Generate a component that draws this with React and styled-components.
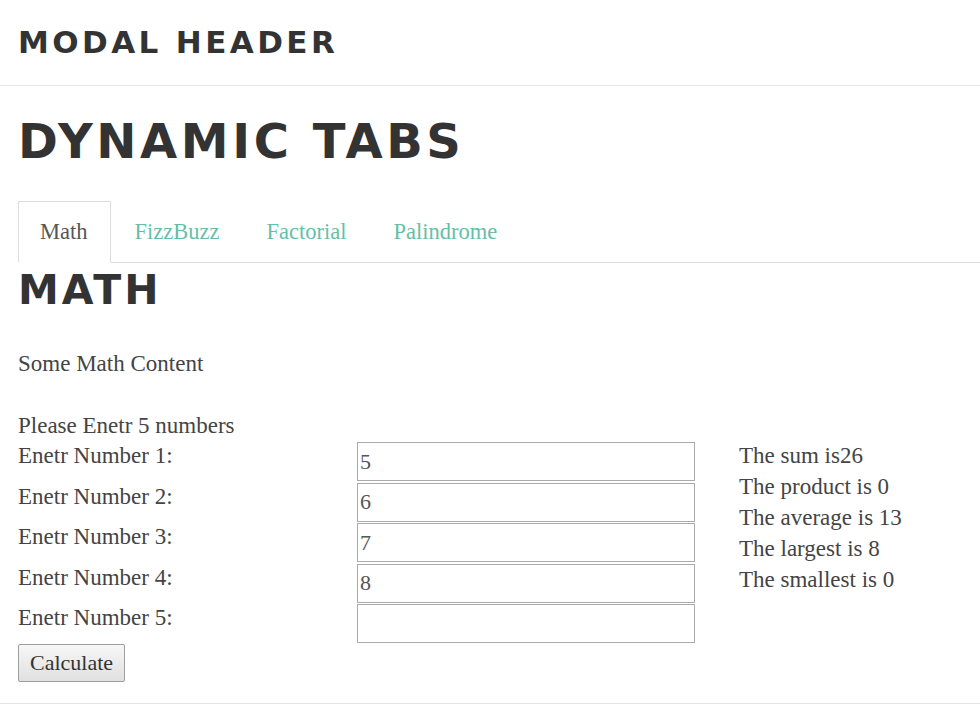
import React from "react";
import styled, { createGlobalStyle } from "styled-components";

const GlobalStyle = createGlobalStyle`
    body {
        margin: 0;
        background: #fff;
        color: #333;
        font-family: "Liberation Serif", serif;
    }
`

const Page = styled.div`
    width: 980px;
    height: 704px;
    overflow: hidden;
    display: flex;
    flex-direction: column;
`

const ModalHead = styled.div`
    height: 85px;
    border-bottom: 1px solid #e5e5e5;
    padding: 0 18px;
    display: flex;
    align-items: center;
`

const Heading = styled.h1`
    margin: 0;
    font-family: "DejaVu Sans", sans-serif;
    font-weight: bold;
    color: #333;
    font-size: ${props => props.size};
    letter-spacing: ${props => props.spacing};
    line-height: 1;
`

const Body = styled.div`
    padding: 0 0 0 18px;
    flex: 1;
    border-bottom: 1px solid #e5e5e5;
`

const TitleWrap = styled.div`
    padding-top: 31px;
    height: 115px;
    box-sizing: border-box;
`

const TabBar = styled.ul`
    list-style: none;
    margin: 0;
    padding: 0;
    display: flex;
    border-bottom: 1px solid #ddd;
`

const Tab = styled.li`
    margin-right: 2px;
    margin-bottom: -1px;
    height: 60px;
    padding: 0 22px 0 21px;
    display: flex;
    align-items: center;
    font-size: 22.5px;
    border: 1px solid ${props => props.active ? "#ddd" : "transparent"};
    border-bottom-color: ${props => props.active ? "#fff" : "transparent"};
    background: ${props => props.active ? "#fff" : "transparent"};
    color: ${props => props.active ? "#555" : "#64bfa8"};
    cursor: pointer;
`

const Section = styled.div`
    padding-top: 7px;
`

const Para = styled.p`
    margin: ${props => props.margin || "0"};
    font-size: 23px;
    line-height: 31px;
    color: #444;
`

const FormGrid = styled.div`
    margin-top: 1px;
    display: grid;
    grid-template-columns: 339px 338px 1fr;
    grid-auto-rows: 39px;
    row-gap: 1.6px;
`

const Label = styled.label`
    grid-column: 1;
    font-size: 23px;
    line-height: 28px;
    color: #444;
`

const NumInput = styled.input`
    grid-column: 2;
    box-sizing: border-box;
    width: 338px;
    height: 39px;
    margin: 0;
    border: 1px solid #aaa;
    padding: 0 2px;
    font-family: "Liberation Serif", serif;
    font-size: 22px;
    color: #555;
    outline: none;
`

const Results = styled.div`
    grid-column: 3;
    grid-row: 1 / 6;
    padding-left: 44px;
    margin-top: -2px;
`

const ResultLine = styled.div`
    font-size: 23px;
    line-height: 31px;
    color: #444;
`

const Button = styled.button`
    margin-top: 1px;
    height: 38px;
    width: 107px;
    font-family: "Liberation Serif", serif;
    font-size: 22px;
    color: #333;
    border: 1px solid #9e9e9e;
    border-radius: 2px;
    background: linear-gradient(#f7f7f7, #e0e0e0);
    padding: 0;
`

const values = ["5", "6", "7", "8", ""];
const results = [
    "The sum is26",
    "The product is 0",
    "The average is 13",
    "The largest is 8",
    "The smallest is 0",
];

const App = () => {
    return <Page>
        <GlobalStyle />
        <ModalHead>
            <Heading size="31px" spacing="3.4px">MODAL HEADER</Heading>
        </ModalHead>
        <Body>
            <TitleWrap>
                <Heading size="48px" spacing="3.6px">DYNAMIC TABS</Heading>
            </TitleWrap>
            <TabBar>
                <Tab active>Math</Tab>
                <Tab>FizzBuzz</Tab>
                <Tab>Factorial</Tab>
                <Tab>Palindrome</Tab>
            </TabBar>
            <Section>
                <Heading size="41px" spacing="3px">MATH</Heading>
                <Para margin="37px 0 0">Some Math Content</Para>
                <Para margin="31px 0 0">Please Enetr 5 numbers</Para>
                <FormGrid>
                    {values.map((v, i) => (
                        <React.Fragment key={i}>
                            <Label style={{ gridRow: i + 1 }}>Enetr Number {i + 1}:</Label>
                            <NumInput style={{ gridRow: i + 1 }} defaultValue={v} />
                        </React.Fragment>
                    ))}
                    <Results>
                        {results.map(r => <ResultLine key={r}>{r}</ResultLine>)}
                    </Results>
                </FormGrid>
                <Button>Calculate</Button>
            </Section>
        </Body>
    </Page>
}

export default App;
